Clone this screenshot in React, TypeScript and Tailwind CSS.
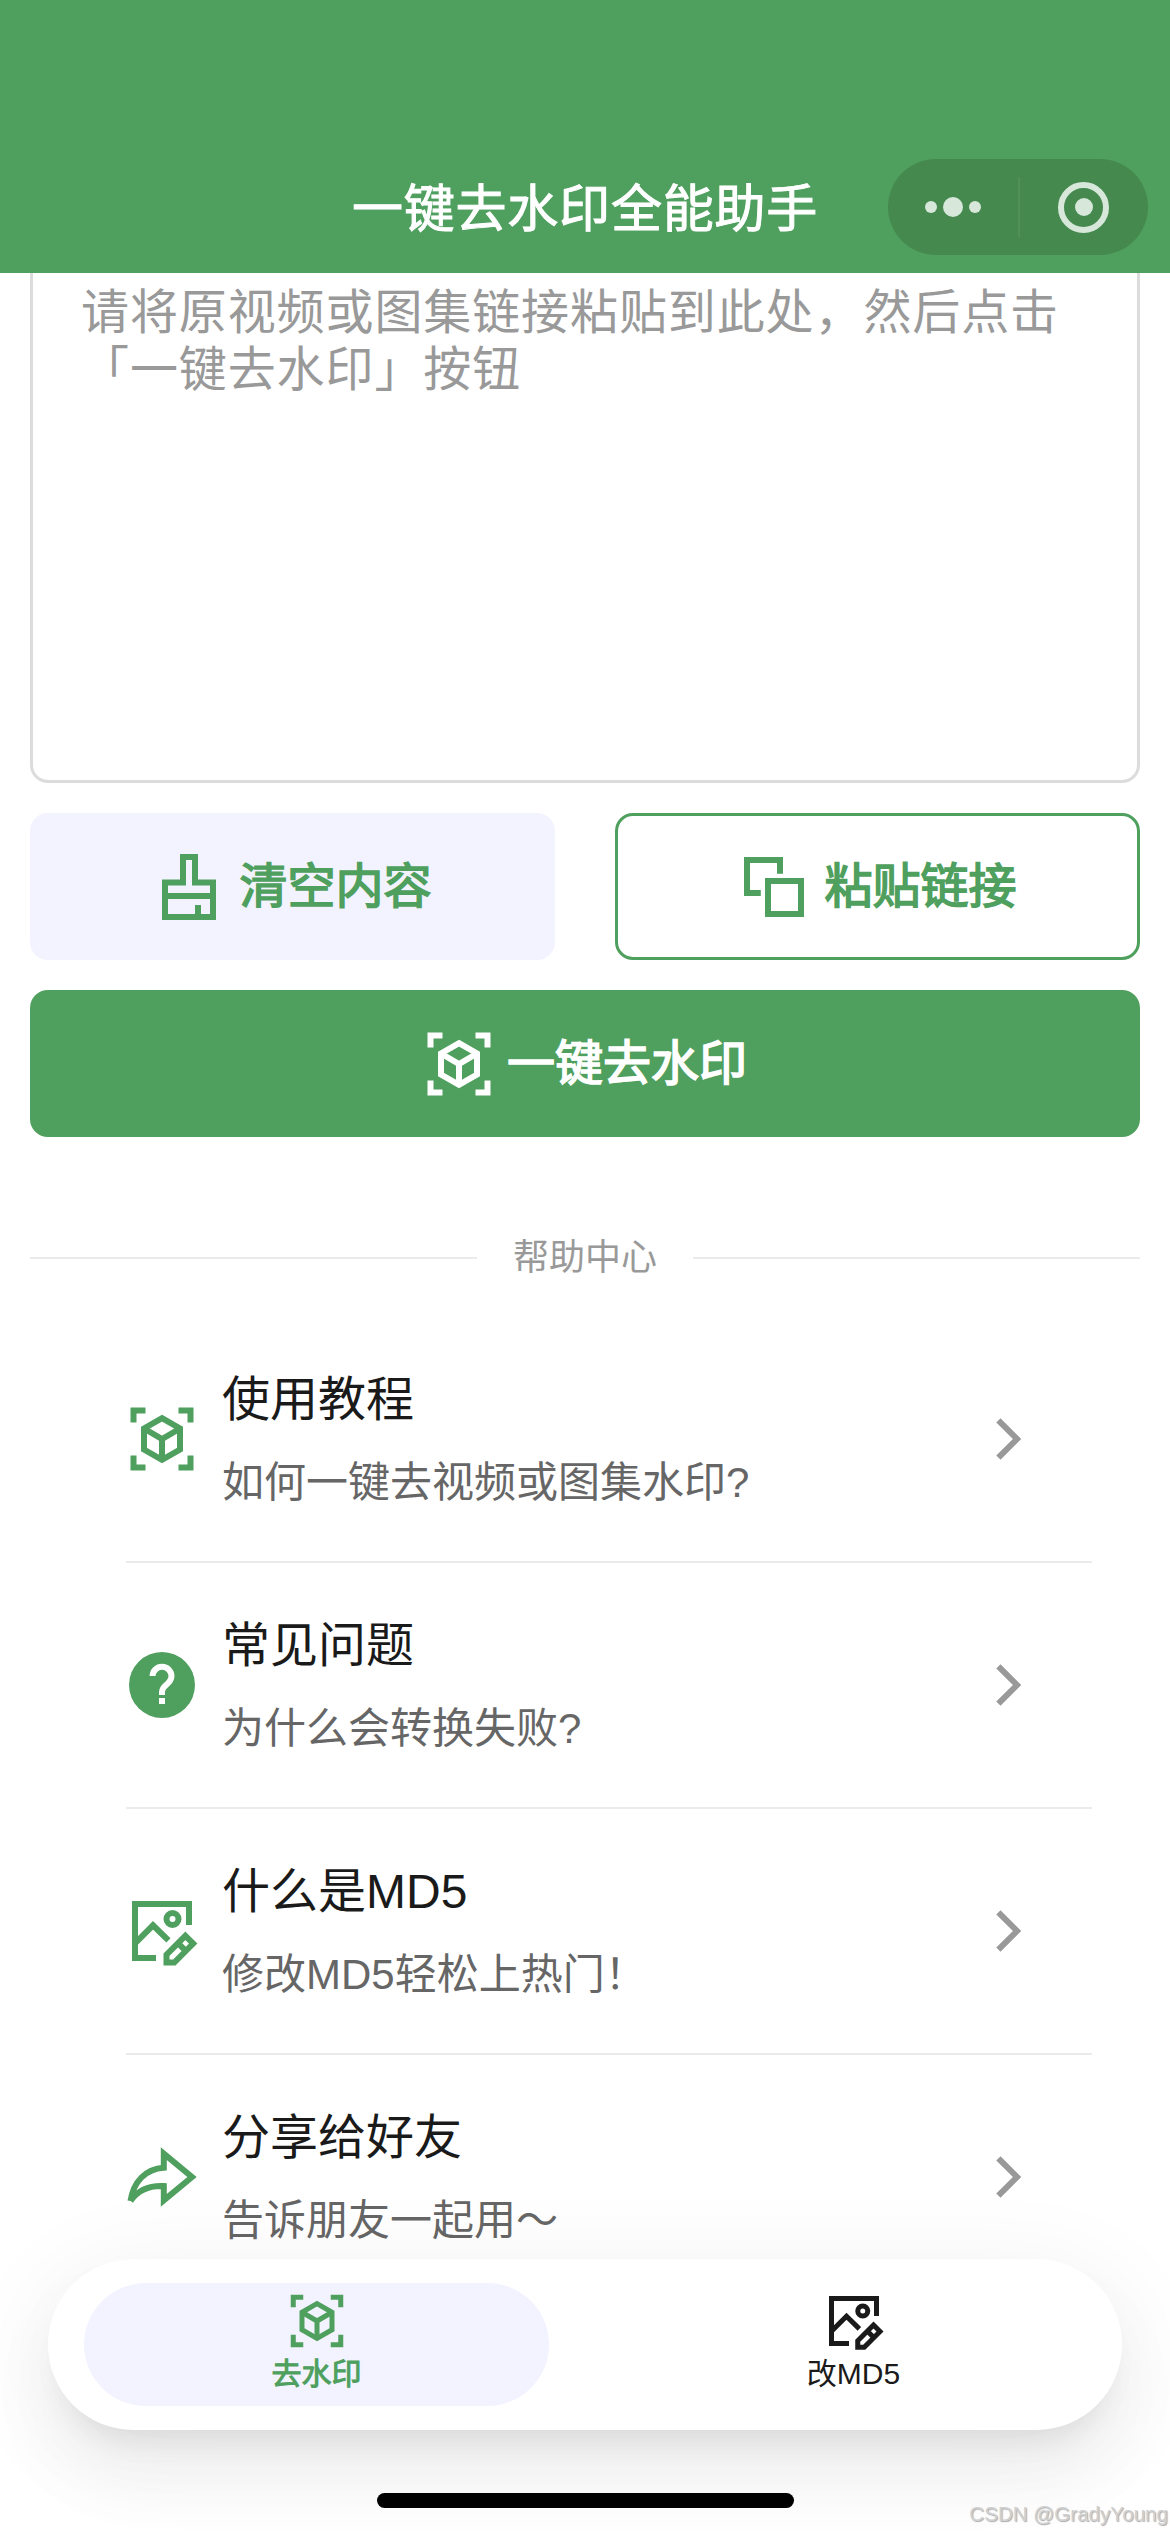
import React from 'react';

interface IconProps {
  className?: string;
}

interface HelpItem {
  icon: React.ReactNode;
  title: string;
  note: string;
}

function ScanCubeIcon({ className }: IconProps) {
  return (
    <svg viewBox="0 0 24 24" fill="none" stroke="currentColor" strokeWidth="2" className={className}>
      <path d="M2.5 6.5v-4h4M17.5 2.5h4v4M21.5 17.5v4h-4M6.5 21.5h-4v-4" />
      <path d="M12 5.05l6 3.45v7l-6 3.45-6-3.45v-7l6-3.45z" />
      <path d="M6 8.5l6 3.5 6-3.5M12 12v7" />
    </svg>
  );
}

function ClearIcon({ className }: IconProps) {
  return (
    <svg viewBox="0 0 24 24" fill="none" stroke="currentColor" strokeWidth="2" className={className}>
      <path d="M10 2h4v8.5h6V22H4V10.5h6V2zM4 15h16M15 22v-4" />
    </svg>
  );
}

function CopyIcon({ className }: IconProps) {
  return (
    <svg viewBox="0 0 24 24" fill="none" stroke="currentColor" strokeWidth="2" className={className}>
      <path d="M14 7.6V3H3v11h4.6M10 10h11v11H10z" />
    </svg>
  );
}

function HelpIcon({ className }: IconProps) {
  return (
    <svg viewBox="0 0 24 24" fill="none" className={className}>
      <circle cx="12" cy="12" r="11" fill="currentColor" />
      <path
        d="M8.85 9A3.15 3.1 0 0 1 15.15 9.1c0 1.3-.75 2-1.6 2.75C12.6 12.65 12 13.3 12 14.3v1M12 16.3v2"
        stroke="white"
        strokeWidth="2"
      />
    </svg>
  );
}

function ImageEditIcon({ className }: IconProps) {
  return (
    <svg viewBox="0 0 24 24" fill="none" stroke="currentColor" strokeWidth="2" className={className}>
      <path d="M10 21H3V3h18v7M3 16.1l6-6 5.15 5.05" />
      <circle cx="15.5" cy="8" r="2" />
      <path d="M19.8 13.61l2.59 2.59-6.3 6.3H13.5v-2.6l6.3-6.29zM17.4 16.1l2.5 2.5" />
    </svg>
  );
}

function ShareIcon({ className }: IconProps) {
  return (
    <svg viewBox="0 0 24 24" fill="none" stroke="currentColor" strokeWidth="2" className={className}>
      <path d="M1.5 20C2.5 13.5 6.5 9.3 12.6 8.9V4.2l9.4 7.8-9.4 7.8V15C8 14.8 4.2 16 1.5 20" />
    </svg>
  );
}

function ChevronIcon({ className }: IconProps) {
  return (
    <svg viewBox="0 0 24 24" fill="none" stroke="currentColor" strokeWidth="2" className={className}>
      <path d="M8.8 5.8L15 12l-6.2 6.2" />
    </svg>
  );
}

const helpItems: HelpItem[] = [
  { icon: <ScanCubeIcon className="size-[72px]" />, title: '使用教程', note: '如何一键去视频或图集水印?' },
  { icon: <HelpIcon className="size-[72px]" />, title: '常见问题', note: '为什么会转换失败?' },
  { icon: <ImageEditIcon className="size-[72px]" />, title: '什么是MD5', note: '修改MD5轻松上热门！' },
  { icon: <ShareIcon className="size-[72px]" />, title: '分享给好友', note: '告诉朋友一起用～' },
];

function Header() {
  return (
    <header className="relative flex h-[273px] shrink-0 items-end justify-center bg-[#4f9f5e] pb-[15px]">
      <h1 className="flex h-24 items-center text-[51px] tracking-[0.8px] text-white [-webkit-text-stroke:1px_currentColor]">
        一键去水印全能助手
      </h1>
      <div className="absolute right-[22px] bottom-[18px] flex h-24 w-[260px] items-center rounded-full bg-[#45894f] text-[#d7e7da]">
        <div className="flex flex-1 items-center justify-center gap-[6px] pl-px">
          <span className="size-[12px] rounded-full bg-current" />
          <span className="size-[20px] rounded-full bg-current" />
          <span className="size-[12px] rounded-full bg-current" />
        </div>
        <div className="h-[60px] w-[2px] bg-[#4f9159]" />
        <div className="flex flex-1 items-center justify-center">
          <div className="flex size-[51px] items-center justify-center rounded-full border-[6px] border-current">
            <span className="size-[18px] rounded-full bg-current" />
          </div>
        </div>
      </div>
    </header>
  );
}

function HelpRow({ item }: { item: HelpItem }) {
  return (
    <li className="ml-12 flex h-[246px] items-center border-b-2 border-[#ebebeb] pr-12">
      <span className="text-[#4f9f5e]">{item.icon}</span>
      <div className="ml-6 flex-1 pt-[2px]">
        <p className="text-[48px] leading-[72px] text-[#1a1a1a]">{item.title}</p>
        <p className="mt-[14px] text-[42px] leading-[66px] text-[#666]">{item.note}</p>
      </div>
      <ChevronIcon className="size-[72px] text-[#999]" />
    </li>
  );
}

function TabBar() {
  return (
    <nav className="absolute bottom-[102px] left-12 flex h-[171px] w-[1074px] items-center rounded-full bg-white shadow-[0_18px_90px_15px_rgba(0,0,0,0.05),0_48px_72px_6px_rgba(0,0,0,0.04),0_24px_30px_-15px_rgba(0,0,0,0.08)]">
      <button className="mx-9 flex h-[123px] flex-1 flex-col items-center rounded-full bg-[#f2f3ff] pt-2 text-[#4f9f5e]">
        <ScanCubeIcon className="size-[60px]" />
        <span className="text-[30px] leading-[45px] [-webkit-text-stroke:1px_currentColor]">去水印</span>
      </button>
      <button className="mx-9 flex h-[123px] flex-1 flex-col items-center rounded-full pt-2 text-[#1a1a1a]">
        <ImageEditIcon className="size-[60px]" />
        <span className="text-[30px] leading-[45px]">改MD5</span>
      </button>
    </nav>
  );
}

export default function App() {
  return (
    <div className="relative flex h-[2532px] w-[1170px] flex-col overflow-hidden bg-white font-['Liberation_Sans','Noto_Sans_CJK_SC',sans-serif]">
      <Header />

      <main className="flex flex-col px-[30px]">
        <div className="h-[510px] rounded-b-[18px] border-3 border-t-0 border-[#dcdcdc] px-12 pt-[11px] text-[48px] leading-[57px] tracking-[0.9px] text-[#999]">
          <p>请将原视频或图集链接粘贴到此处，然后点击</p>
          <p>「一键去水印」按钮</p>
        </div>

        <div className="mt-[30px] grid grid-cols-2 gap-[60px] text-[48px] text-[#4f9f5e] [-webkit-text-stroke:1.6px_currentColor]">
          <button className="flex h-[147px] items-center justify-center gap-[14px] rounded-[18px] bg-[#f2f3ff]">
            <ClearIcon className="size-[72px]" />
            清空内容
          </button>
          <button className="flex h-[147px] items-center justify-center gap-[14px] rounded-[18px] border-3 border-[#4f9f5e]">
            <CopyIcon className="size-[72px]" />
            粘贴链接
          </button>
        </div>

        <button className="mt-[30px] flex h-[147px] items-center justify-center gap-3 rounded-[18px] bg-[#4f9f5e] text-[48px] text-white [-webkit-text-stroke:1.6px_currentColor]">
          <ScanCubeIcon className="size-[72px]" />
          一键去水印
        </button>

        <div className="mt-[88px] flex h-[66px] items-center gap-9 text-[36px] text-[#999]">
          <div className="h-[2px] flex-1 bg-[#ebebeb]" />
          帮助中心
          <div className="h-[2px] flex-1 bg-[#ebebeb]" />
        </div>

        <ul className="mx-12 mt-[26px]">
          {helpItems.map((item) => (
            <HelpRow key={item.title} item={item} />
          ))}
        </ul>
      </main>

      <TabBar />
      <div className="absolute bottom-6 left-[377px] h-[15px] w-[417px] rounded-full bg-black" />
      <p className="absolute right-[2px] bottom-[6px] text-[20.6px] leading-6 text-[#d0d0d0] [text-shadow:1px_1px_1px_#aaa]">
        CSDN @GradyYoung
      </p>
    </div>
  );
}
